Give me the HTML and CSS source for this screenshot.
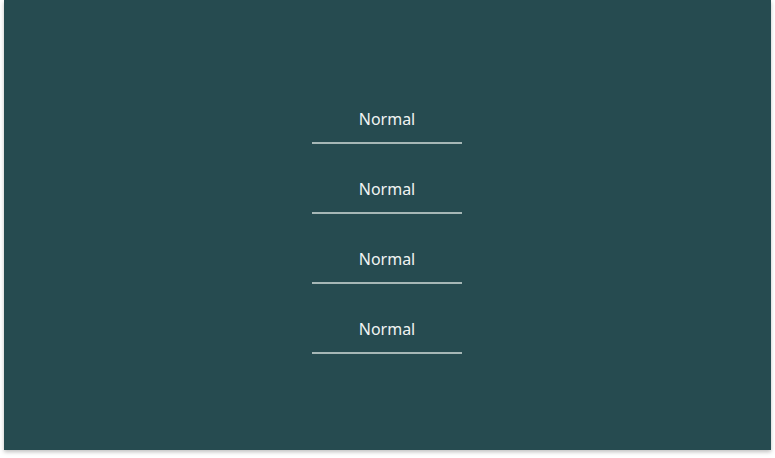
FILE: index.html
```html
<!DOCTYPE html>
<html>
<head>
<meta charset="utf-8">
<link rel="stylesheet" href="styles.css">
</head>
<body>
<div class="panel">
  <div class="list">
    <div class="item"><span class="label">Normal</span><span class="rule"></span></div>
    <div class="item"><span class="label">Normal</span><span class="rule"></span></div>
    <div class="item"><span class="label">Normal</span><span class="rule"></span></div>
    <div class="item"><span class="label">Normal</span><span class="rule"></span></div>
  </div>
</div>
</body>
</html>
```
FILE: styles.css
```css
html, body {
  margin: 0;
  padding: 0;
  background: #ffffff;
}
body {
  width: 775px;
  height: 458px;
  overflow: hidden;
  font-family: "Noto Sans", "Lato", sans-serif;
}
.panel {
  margin-left: 4px;
  width: 767px;
  height: 450px;
  background: #264b50;
  box-shadow: 0 2px 4px rgba(0, 0, 0, 0.25);
  display: flex;
  align-items: center;
  justify-content: center;
}
.list {
  display: flex;
  flex-direction: column;
  align-items: center;
  width: 150px;
  margin-right: 1px;
}
.item {
  display: flex;
  flex-direction: column;
  align-items: center;
  width: 150px;
  height: 70px;
  padding-top: 24px;
  box-sizing: border-box;
}
.label {
  display: block;
  height: 20px;
  line-height: 20px;
  font-size: 16px;
  color: #f1f4f3;
  font-weight: 400;
}
.rule {
  display: block;
  width: 150px;
  height: 2px;
  margin-top: 13px;
  background: #a6b7b6;
}
```
